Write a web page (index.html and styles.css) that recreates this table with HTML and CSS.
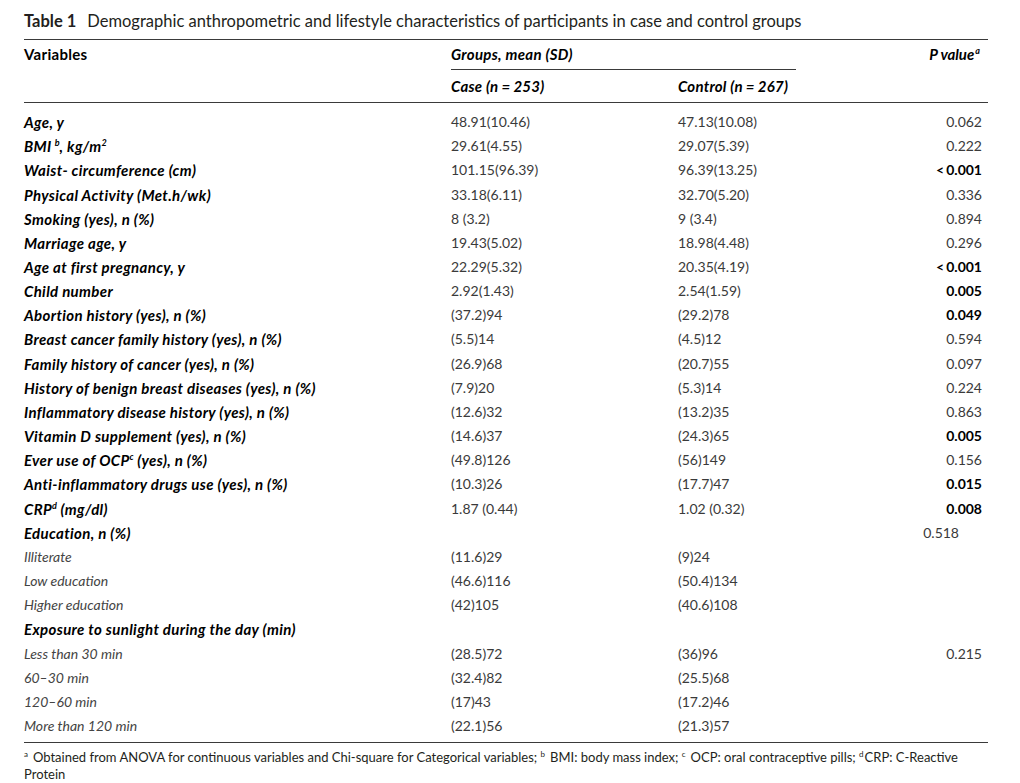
FILE: index.html
```html
<!DOCTYPE html>
<html lang="en">
<head>
<meta charset="utf-8">
<title>Table 1</title>
<link rel="stylesheet" href="styles.css">
</head>
<body>
<div class="page">
  <div class="caption"><span class="tno">Table 1</span>Demographic anthropometric and lifestyle characteristics of participants in case and control groups</div>
  <table class="tbl">
    <colgroup>
      <col class="c1"><col class="c2"><col class="c3"><col class="c4">
    </colgroup>
    <thead>
      <tr class="h1">
        <th class="var">Variables</th>
        <th class="grp" colspan="2"><span>Groups, mean (SD)</span></th>
        <th class="pv">P value<sup>a</sup></th>
      </tr>
      <tr class="h2">
        <th></th>
        <th class="sub">Case (n<span class="eq">=</span>253)</th>
        <th class="sub">Control (n<span class="eq">=</span>267)</th>
        <th></th>
      </tr>
    </thead>
    <tbody>
      <tr class="first"><td class="lab">Age, y</td><td>48.91(10.46)</td><td>47.13(10.08)</td><td class="p">0.062</td></tr>
      <tr><td class="lab">BMI<sup class="sp">b</sup>, kg/m<sup>2</sup></td><td>29.61(4.55)</td><td>29.07(5.39)</td><td class="p">0.222</td></tr>
      <tr><td class="lab">Waist- circumference (cm)</td><td>101.15(96.39)</td><td>96.39(13.25)</td><td class="p b"><span class="lt">&lt;</span>0.001</td></tr>
      <tr><td class="lab">Physical Activity (Met.h/wk)</td><td>33.18(6.11)</td><td>32.70(5.20)</td><td class="p">0.336</td></tr>
      <tr><td class="lab">Smoking (yes), n (%)</td><td>8 (3.2)</td><td>9 (3.4)</td><td class="p">0.894</td></tr>
      <tr><td class="lab">Marriage age, y</td><td>19.43(5.02)</td><td>18.98(4.48)</td><td class="p">0.296</td></tr>
      <tr><td class="lab">Age at first pregnancy, y</td><td>22.29(5.32)</td><td>20.35(4.19)</td><td class="p b"><span class="lt">&lt;</span>0.001</td></tr>
      <tr><td class="lab">Child number</td><td>2.92(1.43)</td><td>2.54(1.59)</td><td class="p b">0.005</td></tr>
      <tr><td class="lab">Abortion history (yes), n (%)</td><td>(37.2)94</td><td>(29.2)78</td><td class="p b">0.049</td></tr>
      <tr><td class="lab">Breast cancer family history (yes), n (%)</td><td>(5.5)14</td><td>(4.5)12</td><td class="p">0.594</td></tr>
      <tr><td class="lab">Family history of cancer (yes), n (%)</td><td>(26.9)68</td><td>(20.7)55</td><td class="p">0.097</td></tr>
      <tr><td class="lab">History of benign breast diseases (yes), n (%)</td><td>(7.9)20</td><td>(5.3)14</td><td class="p">0.224</td></tr>
      <tr><td class="lab">Inflammatory disease history (yes), n (%)</td><td>(12.6)32</td><td>(13.2)35</td><td class="p">0.863</td></tr>
      <tr><td class="lab">Vitamin D supplement (yes), n (%)</td><td>(14.6)37</td><td>(24.3)65</td><td class="p b">0.005</td></tr>
      <tr><td class="lab">Ever use of OCP<sup>c</sup> (yes), n (%)</td><td>(49.8)126</td><td>(56)149</td><td class="p">0.156</td></tr>
      <tr><td class="lab">Anti-inflammatory drugs use (yes), n (%)</td><td>(10.3)26</td><td>(17.7)47</td><td class="p b">0.015</td></tr>
      <tr><td class="lab">CRP<sup>d</sup> (mg/dl)</td><td>1.87 (0.44)</td><td>1.02 (0.32)</td><td class="p b">0.008</td></tr>
      <tr><td class="lab">Education, n (%)</td><td></td><td></td><td class="p off">0.518</td></tr>
      <tr><td class="sublab">Illiterate</td><td>(11.6)29</td><td>(9)24</td><td class="p"></td></tr>
      <tr><td class="sublab">Low education</td><td>(46.6)116</td><td>(50.4)134</td><td class="p"></td></tr>
      <tr><td class="sublab">Higher education</td><td>(42)105</td><td>(40.6)108</td><td class="p"></td></tr>
      <tr><td class="lab">Exposure to sunlight during the day (min)</td><td></td><td></td><td class="p"></td></tr>
      <tr><td class="sublab">Less than 30 min</td><td>(28.5)72</td><td>(36)96</td><td class="p">0.215</td></tr>
      <tr><td class="sublab">60–30 min</td><td>(32.4)82</td><td>(25.5)68</td><td class="p"></td></tr>
      <tr><td class="sublab">120–60 min</td><td>(17)43</td><td>(17.2)46</td><td class="p"></td></tr>
      <tr class="last"><td class="sublab">More than 120 min</td><td>(22.1)56</td><td>(21.3)57</td><td class="p"></td></tr>
    </tbody>
  </table>
  <div class="foot"><span class="fs">a</span>Obtained from ANOVA for continuous variables and Chi-square for Categorical variables; <span class="fs">b</span>BMI: body mass index; <span class="fs">c</span>OCP: oral contraceptive pills; <span class="fs tight">d</span>CRP: C-Reactive<br>Protein</div>
</div>
</body>
</html>
```

FILE: styles.css
```css
html, body {
  margin: 0;
  padding: 0;
  background: #fff;
}
body {
  font-family: Lato, "Open Sans", sans-serif;
  color: #231f20;
}
.page {
  width: 964px;
  padding: 0 0 0 24px;
}
.caption {
  font-size: 16.5px;
  line-height: 20px;
  padding-top: 11px;
  height: 28px;
  color: #231f20;
  white-space: nowrap;
}
.tno {
  font-weight: 700;
  margin-right: 11px;
}
.tbl {
  width: 964px;
  border-collapse: collapse;
  table-layout: fixed;
  border-top: 1px solid #3a3a3a;
  border-bottom: 1px solid #3a3a3a;
  font-size: 14px;
}
.c1 { width: 427px; }
.c2 { width: 227px; }
.c3 { width: 118px; }
.c4 { width: 192px; }
th, td {
  padding: 0;
  text-align: left;
  white-space: nowrap;
  font-weight: 400;
}
thead th {
  font-weight: 700;
  color: #000;
  font-size: 15px;
  letter-spacing: 0.3px;
}
.h1 th {
  height: 30px;
  vertical-align: top;
  padding-top: 4px;
  box-sizing: border-box;
  line-height: 20px;
}
.h1 .var { font-style: normal; }
.h1 .grp {
  font-style: italic;
  border-bottom: 1px solid #3a3a3a;
}
.h1 .pv {
  font-style: italic;
  text-align: right;
  padding-right: 8px;
  letter-spacing: 0;
}
.pv sup {
  font-size: 9px;
  vertical-align: 6px;
  line-height: 0;
  margin-left: 1px;
}
.h2 th {
  height: 32px;
  line-height: 20px;
  vertical-align: middle;
  border-bottom: 1px solid #3a3a3a;
}
.h2 .sub {
  font-style: italic;
  letter-spacing: 0.25px;
}
.eq {
  margin: 0 3px;
}
tbody td {
  height: 24.16px;
  line-height: 20px;
  vertical-align: middle;
  color: #3a3a3a;
}
tbody tr.first td {
  padding-top: 7px;
}
tbody tr.last td {
  padding-bottom: 4px;
}
td.lab {
  font-weight: 700;
  font-style: italic;
  color: #000;
  font-size: 15px;
  letter-spacing: 0.35px;
}
td.sublab {
  font-style: italic;
  color: #444;
}
td.lab sup {
  font-size: 9px;
  vertical-align: 6px;
  line-height: 0;
  letter-spacing: 0;
}
td.lab sup.sp {
  margin-left: 3px;
}
td.p {
  text-align: right;
  padding-right: 6px;
}
td.p.b {
  font-weight: 700;
  color: #000;
}
td.p.off {
  padding-right: 29px;
}
.lt {
  margin-right: 2px;
}
.foot {
  font-size: 13px;
  line-height: 17px;
  padding-top: 6px;
  color: #231f20;
  width: 964px;
}
.fs {
  display: inline-block;
  font-size: 8px;
  line-height: 8px;
  vertical-align: top;
  margin-top: 1px;
  margin-right: 5px;
}
.fs.tight {
  margin-right: 1px;
}
```
